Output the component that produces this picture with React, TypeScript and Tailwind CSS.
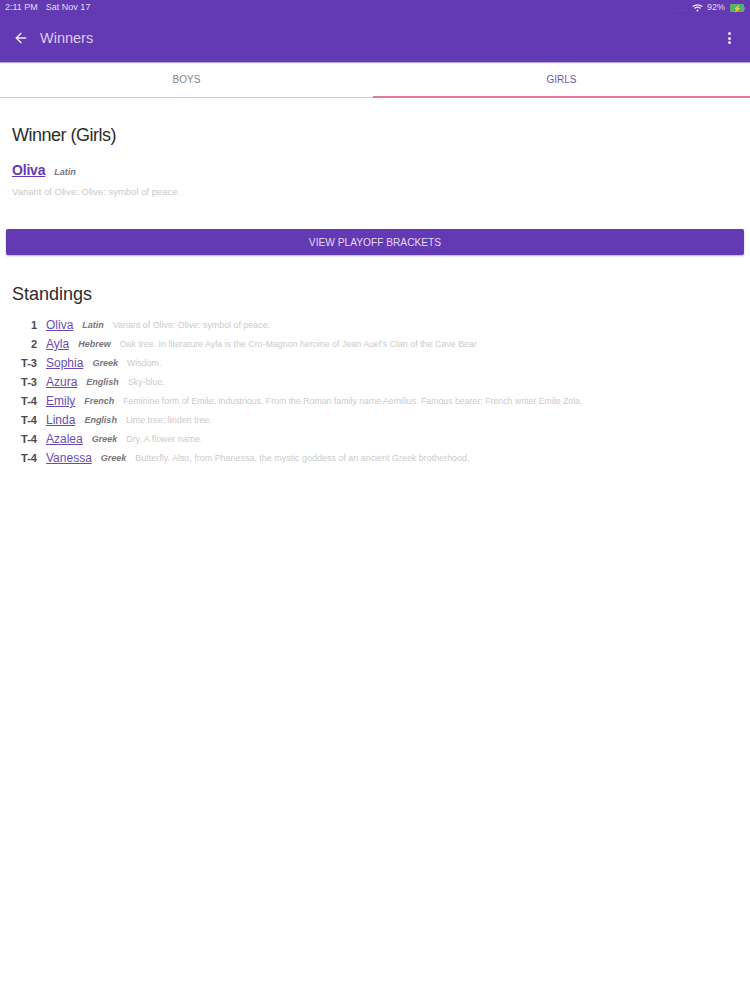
import { ArrowLeft } from "lucide-react";

const standings = [
  { rank: "1", name: "Oliva", origin: "Latin", meaning: "Variant of Olive: Olive: symbol of peace.", size: "text-[8.9px]" },
  { rank: "2", name: "Ayla", origin: "Hebrew", meaning: "Oak tree. In literature Ayla is the Cro-Magnon heroine of Jean Auel's Clan of the Cave Bear", size: "text-[8.9px]" },
  { rank: "T-3", name: "Sophia", origin: "Greek", meaning: "Wisdom.", size: "text-[8.9px]" },
  { rank: "T-3", name: "Azura", origin: "English", meaning: "Sky-blue.", size: "text-[8.9px]" },
  { rank: "T-4", name: "Emily", origin: "French", meaning: "Feminine form of Emile: Industrious. From the Roman family name Aemilius. Famous bearer: French writer Emile Zola.", size: "text-[8.75px]" },
  { rank: "T-4", name: "Linda", origin: "English", meaning: "Lime tree; linden tree.", size: "text-[8.9px]" },
  { rank: "T-4", name: "Azalea", origin: "Greek", meaning: "Dry. A flower name.", size: "text-[8.9px]" },
  { rank: "T-4", name: "Vanessa", origin: "Greek", meaning: "Butterfly. Also, from Phanessa, the mystic goddess of an ancient Greek brotherhood.", size: "text-[8.95px]" },
];

function StatusBar() {
  return (
    <div className="flex h-[14px] items-center justify-between pl-[5px] pr-[5px] text-[9px] text-[#e6dcf3]">
      <div className="flex gap-[8px]">
        <span>2:11 PM</span>
        <span>Sat Nov 17</span>
      </div>
      <div className="flex items-center gap-[3px]">
        <span className="mr-[1px] text-[7px] leading-none tracking-[1px] text-[#8f77c4]">....</span>
        <svg width="11" height="8" viewBox="0 0 11 8" fill="none" stroke="#f1ebf8">
          <path d="M0.7 2.6C3.4 0.2 7.6 0.2 10.3 2.6" strokeWidth="1.3" />
          <path d="M2.5 4.4C4.2 3 6.8 3 8.5 4.4" strokeWidth="1.3" />
          <circle cx="5.5" cy="6.4" r="1" fill="#f1ebf8" stroke="none" />
        </svg>
        <span className="ml-[1px] mr-[2px]">92%</span>
        <div className="flex items-center">
          <div className="flex h-[8px] w-[14px] items-center justify-center rounded-[1px] bg-[#58b06e] text-[7px] leading-none text-white">
            ⚡
          </div>
          <div className="h-[3px] w-[1px] bg-[#8f77c4]" />
        </div>
      </div>
    </div>
  );
}

export default function App() {
  return (
    <div className="min-h-[1000px] bg-white font-['Liberation_Sans',Arial,sans-serif]">
      <header className="h-[62px] bg-[#6439b4] pt-[1px] shadow-[0_1px_1px_rgba(100,57,180,0.45)]">
        <StatusBar />
        <div className="mt-[8px] flex h-[30px] items-center justify-between pl-[13px] pr-[19px]">
          <div className="flex items-center gap-[11px]">
            <ArrowLeft size={16} strokeWidth={2} className="text-[#f1ebf8]" />
            <span className="pt-[1px] text-[14.5px] text-[#dccff0]">Winners</span>
          </div>
          <div className="flex flex-col gap-[1.5px]">
            <span className="h-[3px] w-[3px] rounded-full bg-[#eee8f7]" />
            <span className="h-[3px] w-[3px] rounded-full bg-[#eee8f7]" />
            <span className="h-[3px] w-[3px] rounded-full bg-[#eee8f7]" />
          </div>
        </div>
      </header>

      <nav className="grid h-[36px] grid-cols-[373px_1fr] text-[10px] font-medium">
        <div className="flex items-center justify-center border-b-[1px] border-[#cfcfcf] text-[#858585]">
          BOYS
        </div>
        <div className="flex items-center justify-center border-b-[2px] border-[#e2799a] text-[#6a55ab]">
          GIRLS
        </div>
      </nav>

      <main className="px-[6px]">
        <section className="px-[6px] pt-[27px]">
          <h2 className="text-[18px] leading-[21px] tracking-[-0.5px] text-[#2c2c2c]">Winner (Girls)</h2>
          <div className="mt-[14px] flex items-baseline gap-[9px]">
            <a className="text-[14px] font-bold leading-[20px] tracking-[-0.2px] text-[#6439b4] underline">Oliva</a>
            <span className="text-[9px] font-bold italic text-[#77757c]">Latin</span>
          </div>
          <p className="mt-[5px] text-[9.5px] leading-[14px] text-[#c9c9c9]">
            Variant of Olive: Olive: symbol of peace.
          </p>
        </section>

        <button className="mt-[30px] flex h-[26px] w-full items-center justify-center rounded-[2px] bg-[#6439b4] pt-[1px] text-[10.2px] font-medium text-[#e4daf3] shadow-[0_1px_2px_rgba(0,0,0,0.3)]">
          VIEW PLAYOFF BRACKETS
        </button>

        <section className="px-[6px] pt-[29px]">
          <h2 className="text-[18px] leading-[21px] text-[#2c2c2c]">Standings</h2>
          <div className="mt-[11px] flex flex-col">
            {standings.map((row, i) => (
              <div key={i} className="flex h-[19px] items-center">
                <span className="w-[25px] text-right text-[11px] font-bold text-[#4a4a4a]">{row.rank}</span>
                <a className="ml-[9px] pb-[1px] text-[12px] text-[#6a4bb8] underline">{row.name}</a>
                <span className="ml-[9px] text-[9px] font-bold italic text-[#77757c]">{row.origin}</span>
                <span className={`ml-[9px] ${row.size} text-[#cbcbcb]`}>{row.meaning}</span>
              </div>
            ))}
          </div>
        </section>
      </main>
    </div>
  );
}
